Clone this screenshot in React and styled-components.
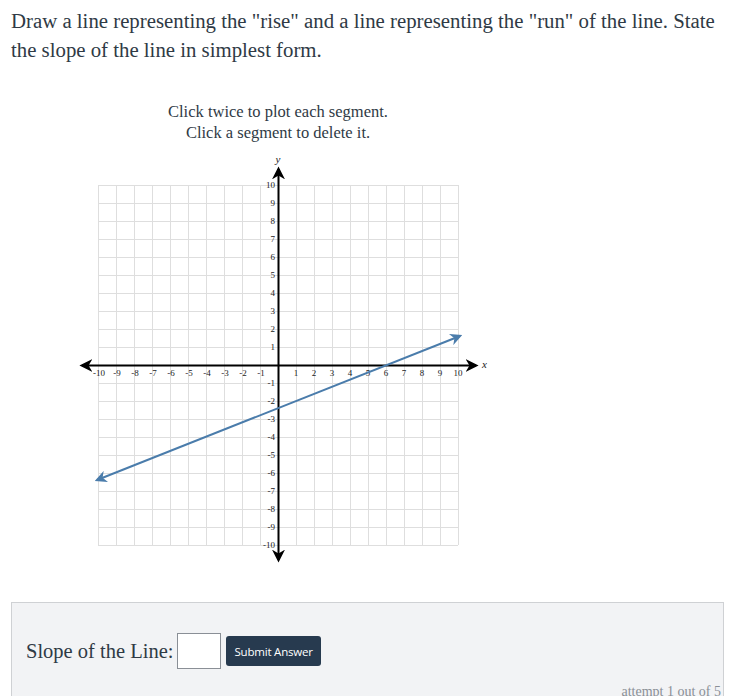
import React from "react";
import styled, { createGlobalStyle } from "styled-components";

const Global = createGlobalStyle`
  html, body { margin: 0; padding: 0; background: #fff; }
  body { font-family: "Liberation Serif", "DejaVu Serif", serif; color: #2f3a45; }
`;

const Page = styled.div`
  padding: 7px 12px 0 11px;
  width: 713px;
  height: 689px;
  overflow: hidden;
  box-sizing: content-box;
`;

const Prompt = styled.p`
  margin: 0;
  font-size: 20.8px;
  line-height: 28.5px;
  color: #2f3a45;
`;

const GraphBlock = styled.div`
  width: 420px;
  margin: 37px 0 0 57px;
  display: flex;
  flex-direction: column;
  align-items: center;
`;

const Instructions = styled.div`
  text-align: center;
  font-size: 16.5px;
  line-height: 21px;
  color: #2f3a45;
`;

const Plot = styled.svg`
  display: block;
  margin-top: 7px;
  overflow: visible;
`;

const Panel = styled.div`
  margin-top: 32px;
  border: 1px solid #cfd1d4;
  background: #f2f3f5;
  padding: 30px 2px 0 14px;
  height: 120px;
`;

const Row = styled.div`
  display: flex;
  align-items: center;
  gap: 4px;
`;

const Label = styled.span`
  font-size: 20.5px;
  color: #2f3a45;
`;

const Input = styled.div`
  width: 42px;
  height: 34px;
  border: 1px solid #8a8f96;
  background: #fff;
`;

const Button = styled.button`
  height: 30px;
  padding: 0 8px;
  margin-left: 1px;
  border: none;
  border-radius: 3px;
  background: #273a4f;
  color: #fff;
  font-family: "Open Sans", "Noto Sans", sans-serif;
  font-size: 11.5px;
  letter-spacing: -0.2px;
`;

const Attempt = styled.div`
  text-align: right;
  font-size: 14px;
  line-height: 16px;
  color: #8a8f96;
  margin-top: 15px;
`;

const O = { x: 210, y: 215 };
const U = 18;
const range = Array.from({ length: 21 }, (_, i) => i - 10);

function Graph() {
  const px = (v) => O.x + v * U;
  const py = (v) => O.y - v * U;
  return (
    <Plot width="420" height="420" viewBox="0 0 420 420">
      <defs>
        <marker id="blk" viewBox="0 0 10 10" refX="8" refY="5" markerWidth="6.5" markerHeight="6.5" orient="auto-start-reverse">
          <path d="M0,0 L10,5 L0,10 L3,5 Z" fill="#000" />
        </marker>
        <marker id="blu" viewBox="0 0 10 10" refX="8" refY="5" markerWidth="6" markerHeight="6" orient="auto-start-reverse">
          <path d="M0,0 L10,5 L0,10 L3,5 Z" fill="#4a7cab" />
        </marker>
      </defs>
      <g shapeRendering="crispEdges">
        {range.map((i) => (
          <line key={"v" + i} x1={px(i) + 0.5} y1={py(10)} x2={px(i) + 0.5} y2={py(-10)} stroke="#dedede" strokeWidth="1" />
        ))}
        {range.map((i) => (
          <line key={"h" + i} x1={px(-10)} y1={py(i) + 0.5} x2={px(10)} y2={py(i) + 0.5} stroke="#dedede" strokeWidth="1" />
        ))}
      </g>
      <line x1="14" y1={O.y + 0.5} x2="408" y2={O.y + 0.5} stroke="#000" strokeWidth="2" markerStart="url(#blk)" markerEnd="url(#blk)" />
      <line x1={O.x + 0.5} y1="19" x2={O.x + 0.5} y2="410" stroke="#000" strokeWidth="2" markerStart="url(#blk)" markerEnd="url(#blk)" />
      <g fontFamily="Liberation Serif, serif" fontSize="9" fill="#222">
        {range.filter((i) => i !== 0).map((i) => (
          <text key={"tx" + i} x={px(i) + (i < 0 ? 1 : 0)} y={O.y + 11} textAnchor="middle">
            {i < 0 ? "-" + -i : i}
          </text>
        ))}
        {range.filter((i) => i !== 0).map((i) => (
          <text key={"ty" + i} x={O.x - 3} y={py(i) + 3} textAnchor="end">
            {i < 0 ? "-" + -i : i}
          </text>
        ))}
      </g>
      <text x={O.x} y="13" textAnchor="middle" fontStyle="italic" fontSize="11" fontFamily="Liberation Serif, serif" fill="#222">y</text>
      <text x="414" y={O.y + 3} fontStyle="italic" fontSize="11" fontFamily="Liberation Serif, serif" fill="#222">x</text>
      <line x1="29" y1="330" x2="392" y2="186" stroke="#4a7cab" strokeWidth="2" markerStart="url(#blu)" markerEnd="url(#blu)" />
    </Plot>
  );
}

export default function App() {
  return (
    <>
      <Global />
      <Page>
        <Prompt>
          Draw a line representing the "rise" and a line representing the "run" of the line. State the slope of the line in simplest form.
        </Prompt>
        <GraphBlock>
          <Instructions>
            Click twice to plot each segment.
            <br />
            Click a segment to delete it.
          </Instructions>
          <Graph />
        </GraphBlock>
        <Panel>
          <Row>
            <Label>Slope of the Line:</Label>
            <Input />
            <Button>Submit Answer</Button>
          </Row>
          <Attempt>attempt 1 out of 5</Attempt>
        </Panel>
      </Page>
    </>
  );
}
